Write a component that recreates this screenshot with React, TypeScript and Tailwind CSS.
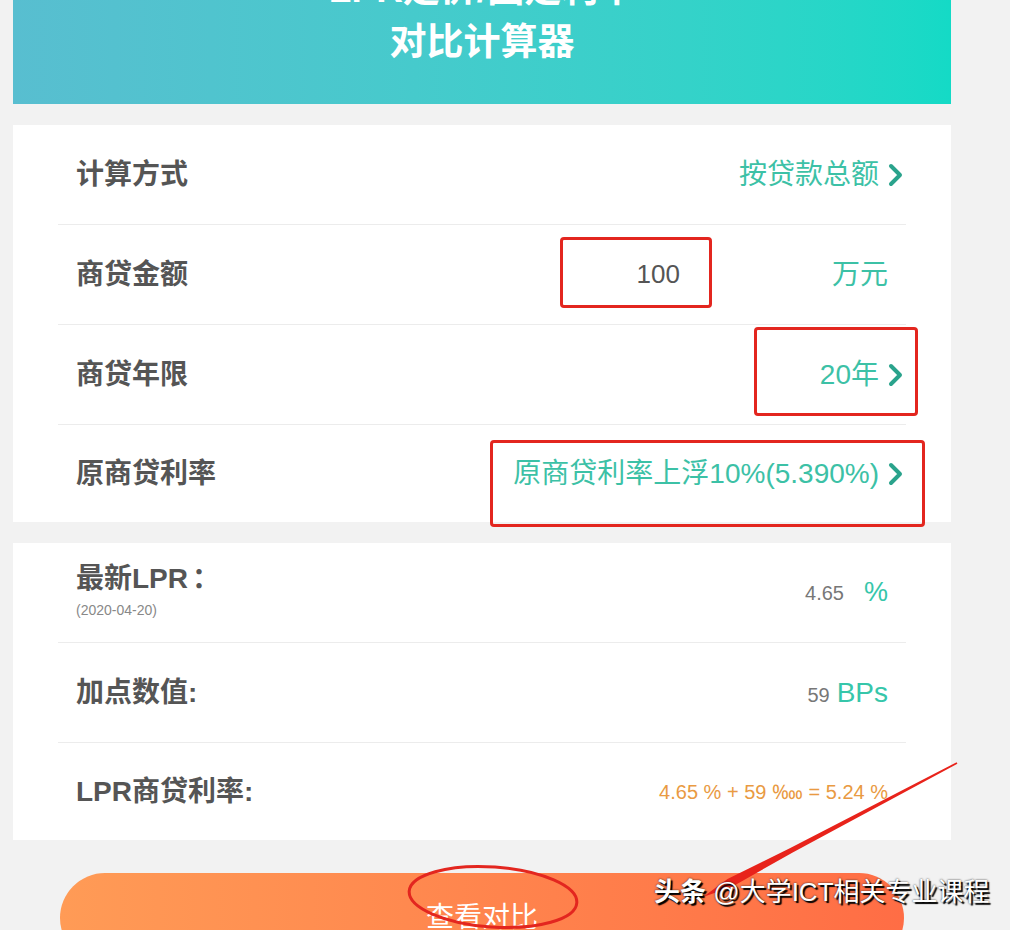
import React from 'react'

const FONT = '"Liberation Sans", "Noto Sans CJK SC", Arial, sans-serif'

function Chevron() {
  return (
    <svg width="17" height="24" viewBox="0 0 17 24" className="ml-[8px] shrink-0">
      <path d="M4 3 L13 12 L4 21" fill="none" stroke="#2aa38c" strokeWidth="4" strokeLinecap="round" strokeLinejoin="round" />
    </svg>
  )
}

function Row({ children, last = false, right = 'pr-[18px]' }: { children: React.ReactNode; last?: boolean; right?: string }) {
  return (
    <div
      className={`flex items-center justify-between pl-[18px] ${right} ${
        last ? 'h-[97px]' : 'h-[100px] border-b border-[#ececec]'
      }`}
    >
      {children}
    </div>
  )
}

function Label({ children }: { children: React.ReactNode }) {
  return <span className="text-[28px] font-bold text-[#555555] leading-none">{children}</span>
}

export default function App() {
  return (
    <div className="relative h-[930px] w-[1010px] overflow-hidden bg-[#f2f2f2]" style={{ fontFamily: FONT }}>
      <div className="ml-[13px] w-[938px]">
        {/* Banner */}
        <div className="flex h-[104px] flex-col items-center justify-end overflow-hidden bg-linear-to-r from-[#58bed0] to-[#14dac6] pb-[35px]">
          <div className="text-[37px] font-bold leading-[53px] text-white">LPR定价/固定利率</div>
          <div className="text-[37px] font-bold leading-[53px] text-white">对比计算器</div>
        </div>

        {/* 贷款信息 */}
        <div className="mt-[21px] bg-white px-[45px]">
          <Row right="pr-[2px]">
            <Label>计算方式</Label>
            <div className="flex items-center text-[28px] text-[#3cc1a6]">
              按贷款总额
              <Chevron />
            </div>
          </Row>
          <Row>
            <Label>商贷金额</Label>
            <div className="flex items-center">
              <span className="mr-[152px] text-[26px] text-[#555555]">100</span>
              <span className="text-[28px] text-[#3cc1a6]">万元</span>
            </div>
          </Row>
          <Row right="pr-[2px]">
            <Label>商贷年限</Label>
            <div className="flex items-center text-[28px] text-[#3cc1a6]">
              20年
              <Chevron />
            </div>
          </Row>
          <Row last right="pr-[2px]">
            <Label>原商贷利率</Label>
            <div className="flex items-center text-[28px] text-[#3cc1a6]">
              原商贷利率上浮10%(5.390%)
              <Chevron />
            </div>
          </Row>
        </div>

        {/* LPR */}
        <div className="mt-[21px] bg-white px-[45px]">
          <Row>
            <div className="flex flex-col">
              <Label>
                最新LPR<span className="ml-[4px]">：</span>
              </Label>
              <span className="mt-[7px] text-[14px] text-[#888888]">(2020-04-20)</span>
            </div>
            <div className="flex items-center">
              <span className="text-[20px] text-[#777777]">4.65</span>
              <span className="ml-[20px] text-[27px] text-[#36c6aa]">%</span>
            </div>
          </Row>
          <Row>
            <Label>加点数值:</Label>
            <div className="flex items-baseline">
              <span className="text-[20px] text-[#777777]">59</span>
              <span className="ml-[7px] text-[28px] text-[#36c6aa]">BPs</span>
            </div>
          </Row>
          <Row last>
            <Label>LPR商贷利率:</Label>
            <span className="text-[20px] text-[#e99a42]">4.65 % + 59 ‱ = 5.24 %</span>
          </Row>
        </div>

        {/* Button */}
        <div className="mx-[47px] mt-[33px] flex h-[90px] items-center justify-center rounded-[45px] bg-linear-to-r from-[#ff9b56] to-[#ff6d45] text-[28px] text-white">
          查看对比
        </div>
      </div>

      {/* 标注 */}
      <div className="absolute left-[560px] top-[237px] h-[71px] w-[152px] rounded-[4px] border-[3px] border-[#e3261f]" />
      <div className="absolute left-[754px] top-[327px] h-[89px] w-[164px] rounded-[4px] border-[3px] border-[#e3261f]" />
      <div className="absolute left-[490px] top-[440px] h-[87px] w-[435px] rounded-[4px] border-[3px] border-[#e3261f]" />

      <svg className="pointer-events-none absolute left-0 top-0" width="1010" height="930">
        <ellipse cx="493" cy="897" rx="84" ry="30" fill="none" stroke="#e3261f" strokeWidth="3" transform="rotate(4 493 897)" />
        <polygon
          points="956.6,762.3 957.4,763.7 792.7,852.5 731.7,887 703,897 727.5,879 790.3,848.1"
          fill="#e8231b"
        />
      </svg>

      <div className="absolute left-[654px] top-[875px] text-[26px] leading-[34px] text-white [text-shadow:2px_2px_1px_#000,0_0_2px_#222]">
        <span className="font-bold">头条</span> @大学ICT相关专业课程
      </div>
    </div>
  )
}
